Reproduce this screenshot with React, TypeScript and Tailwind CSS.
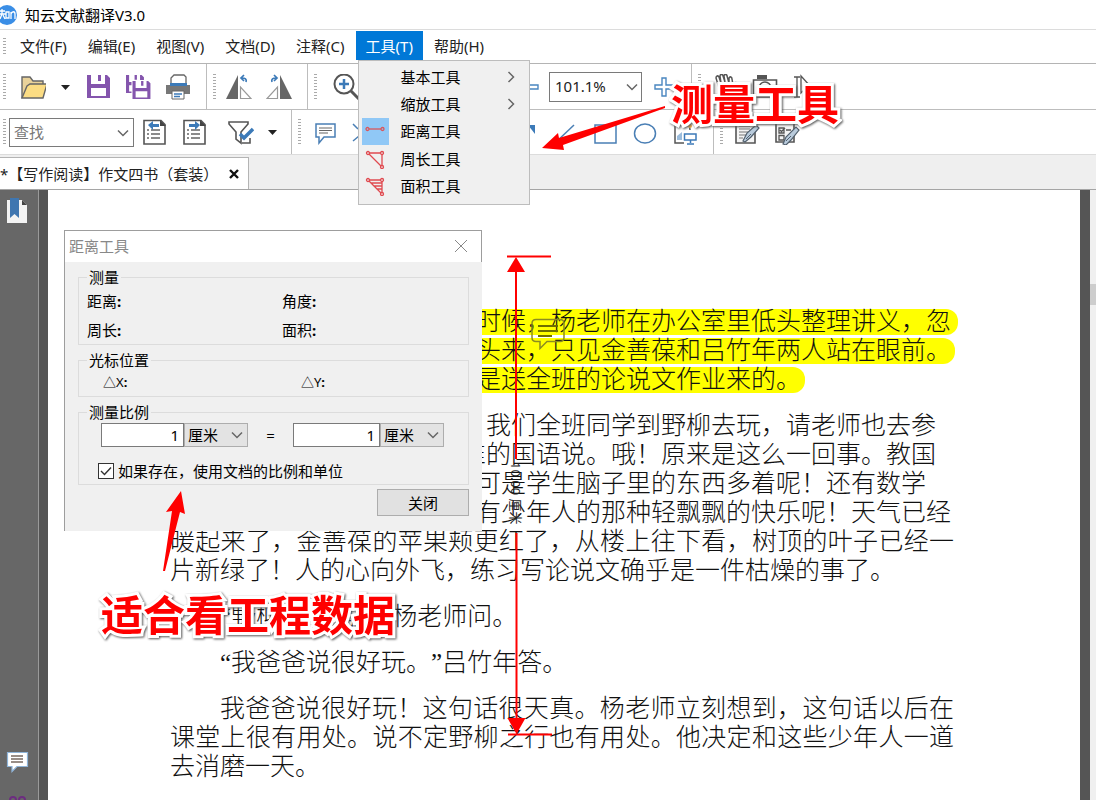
import React from 'react';

interface IconProps {
  children: React.ReactNode;
  label: string;
}

const Tool: React.FC<IconProps> = ({ children, label }) => (
  <button type="button" aria-label={label} className="h-[26px] w-[26px] shrink-0">
    <svg viewBox="0 0 26 26" className="block h-[26px] w-[26px]" fill="none">
      {children}
    </svg>
  </button>
);

const Caret: React.FC<{ label: string }> = ({ label }) => (
  <button type="button" aria-label={label} className="h-[26px] w-[11px] shrink-0">
    <svg viewBox="0 0 11 26" className="block h-[26px] w-[11px]">
      <path d="M1 11h9l-4.500 5z" fill="#222" />
    </svg>
  </button>
);

const Grip: React.FC = () => (
  <span className="h-[26px] w-[3px] shrink-0 bg-[repeating-linear-gradient(to_bottom,#aaa_0px,#aaa_1px,#fff_1px,#fff_3px)]" />
);

const Chevron: React.FC<{ className?: string }> = ({ className = '' }) => (
  <svg viewBox="0 0 12 8" className={`pointer-events-none h-2 w-3 ${className}`} fill="none" stroke="#666" strokeWidth="1.500">
    <path d="M1 1.500l5 5 5-5" />
  </svg>
);

const menus = ['文件(F)', '编辑(E)', '视图(V)', '文档(D)', '注释(C)'];

const TextPage: React.FC = () => (
  <>
    <path d="M2 1h19v23H2z" fill="#f4f4f4" stroke="#555" strokeWidth="1.600" />
    <path d="M5 7h11M5 10h11M5 13h9M5 16h7M5 19h4" stroke="#777" strokeWidth="1.200" />
    <path d="M9 22l4-8 9-8 3 3-8 9-6 5z" fill="#b9cbdc" stroke="#52606e" strokeWidth="1.200" />
    <path d="M12 20l5-5" stroke="#52606e" />
  </>
);

const FormPage: React.FC = () => (
  <>
    <path d="M2 1h18v22H2z" fill="#f4f4f4" stroke="#555" strokeWidth="1.600" />
    <path d="M5 9h5v5H5zM5 16.500h5v4.500H5zM6 11l1.500 1.500L11 9M12 11h5" stroke="#555" strokeWidth="1.300" />
    <path d="M9 25l3-7 10-10 3 3-8 10-5 5z" fill="#b9cbdc" stroke="#52606e" strokeWidth="1.200" />
    <path d="M12 22l5-5" stroke="#52606e" />
  </>
);

const ListPage: React.FC<{ back?: boolean }> = ({ back = false }) => (
  <>
    <path d="M2 1.500h17l4 4V25H2z" fill="#fff" stroke="#555" strokeWidth="1.600" />
    <path d="M18 1v6h6z" fill="#444" />
    <path d="M5 11h2M5 15h2M5 19h2M9 11h9M9 15h9M9 19h9" stroke="#666" strokeWidth="1.300" />
    {back ? (
      <path d="M6 6l5-4v3h6v3h-6v3z" fill="#3c7ab8" />
    ) : (
      <path d="M18 6l-5-4v3H7v3h6v3z" fill="#3c7ab8" />
    )}
  </>
);

const Floppy: React.FC = () => (
  <path fillRule="evenodd" d="M0 0h20l3 3v20H0zM4 0v9h14V0h-4v6h-3V0zM4 13v8h15v-8z" fill="#8455ad" />
);

const TitleBar: React.FC = () => (
  <header className="flex h-[30px] shrink-0 items-center gap-2 border-b border-[#dcdcdc] bg-white">
    <svg viewBox="0 0 17 20" className="h-5 w-[17px]">
      <circle cx="7" cy="10" r="10" fill="#3a8ee6" />
      <path d="M0 6h5M2 4v5M0 9h6M2 9l-2 5M3 10l2 4M6 7h3v6H6zM11 14V7M11 9c1-3 4-3 4 0v5" fill="none" stroke="#fff" strokeWidth="1.300" />
    </svg>
    <h1 className="text-[15px] leading-5 text-black">知云文献翻译V3.0</h1>
  </header>
);

const ToolsMenu: React.FC = () => (
  <ul className="absolute top-[29px] left-0.5 z-30 grid h-[145px] w-[172px] grid-rows-5 border border-[#bdbdbd] bg-[#f0f0f0] pt-0.5 pb-1 text-black">
    <li className="flex items-center">
      <button type="button" className="flex flex-1 items-center justify-between pr-3 pl-[42px]">
        基本工具
        <Chevron className="-rotate-90" />
      </button>
    </li>
    <li className="flex items-center">
      <button type="button" className="flex flex-1 items-center justify-between pr-3 pl-[42px]">
        缩放工具
        <Chevron className="-rotate-90" />
      </button>
    </li>
    <li className="flex items-center">
      <button type="button" className="flex flex-1 items-center gap-3 pl-[3px]">
        <span className="flex h-[27px] w-[27px] items-center justify-center bg-[#90c8f6]">
          <svg viewBox="0 0 20 20" className="h-5 w-5" fill="none" stroke="#d9575c" strokeWidth="1.300">
            <path d="M4 8h12" />
            <circle cx="2.500" cy="8" r="1.500" />
            <circle cx="17.500" cy="8" r="1.500" />
          </svg>
        </span>
        距离工具
      </button>
    </li>
    <li className="flex items-center">
      <button type="button" className="flex flex-1 items-center gap-3 pl-[3px]">
        <span className="flex h-[27px] w-[27px] items-center justify-center">
          <svg viewBox="0 0 20 20" className="h-5 w-5" fill="none" stroke="#e04a50" strokeWidth="1.300">
            <path d="M4 4h11M4 5l12 12M17 6v10" />
            <circle cx="3" cy="4" r="1.500" />
            <circle cx="17" cy="4" r="1.500" />
            <circle cx="17" cy="18" r="1.500" />
          </svg>
        </span>
        周长工具
      </button>
    </li>
    <li className="flex items-center">
      <button type="button" className="flex flex-1 items-center gap-3 pl-[3px]">
        <span className="flex h-[27px] w-[27px] items-center justify-center">
          <svg viewBox="0 0 20 20" className="h-5 w-5" fill="none" stroke="#e04a50" strokeWidth="1.300">
            <path d="M4 4h11M4 5l12 12M17 6v10M6 7h11M9 10h8M12 13h5" />
            <circle cx="3" cy="4" r="1.500" />
            <circle cx="17" cy="4" r="1.500" />
            <circle cx="17" cy="18" r="1.500" />
          </svg>
        </span>
        面积工具
      </button>
    </li>
  </ul>
);

const MenuBar: React.FC = () => (
  <nav className="flex h-[34px] shrink-0 items-start gap-px border-b border-[#b4b4b4] bg-white pt-px text-[15px] leading-5 text-[#222]">
    <span className="mt-[7px] mr-[3px] ml-[3px] h-[17px] w-[3px] bg-[repeating-linear-gradient(to_bottom,#aaa_0px,#aaa_1px,#fff_1px,#fff_3px)]" />
    {menus.map((menu) => (
      <button key={menu} type="button" className="h-[29px] px-[10px]">
        {menu}
      </button>
    ))}
    <div className="relative">
      <button type="button" className="h-[29px] bg-[#0078d7] px-[10px] text-white">
        工具(T)
      </button>
      <ToolsMenu />
    </div>
    <button type="button" className="h-[29px] px-[10px]">
      帮助(H)
    </button>
  </nav>
);

const MainToolbar: React.FC = () => (
  <div className="flex h-[46px] shrink-0 border-b border-[#bdbdbd] bg-white">
    <div className="flex w-[207px] shrink-0 items-center gap-[14px] border-r border-[#bdbdbd] pl-[3px]">
      <Grip />
      <Tool label="打开">
        <path d="M2 24V3h8l3 4h10v4" fill="#e9d29a" stroke="#666" strokeWidth="1.400" />
        <path d="M2 24l5-12 3-2h17l-4 14z" fill="#fbdc83" stroke="#666" strokeWidth="1.400" />
      </Tool>
      <Caret label="最近打开" />
      <Tool label="保存">
        <g transform="translate(2 1)">
          <Floppy />
        </g>
      </Tool>
      <Tool label="全部保存">
        <g transform="translate(1 1) scale(.78)">
          <Floppy />
        </g>
        <path d="M6.500 6H20v13h5v6H6.500z" fill="#fff" />
        <g transform="translate(7.500 7) scale(.78)">
          <Floppy />
        </g>
      </Tool>
      <Tool label="打印">
        <path d="M6 10V4l3-3h10l2 2v7" fill="#fff" stroke="#666" strokeWidth="1.300" />
        <path d="M1 11h24v9H1z" fill="#777" />
        <path d="M5 9h17v3H5z" fill="#3c7ab8" />
        <path d="M7 17h12v8H7z" fill="#fff" stroke="#666" />
        <path d="M9 20h8M9 22.500h6" stroke="#3c7ab8" strokeWidth="1.300" />
      </Tool>
    </div>
    <div className="flex w-[101px] shrink-0 items-center border-r border-[#bdbdbd] pl-[6px]">
      <Grip />
      <div className="ml-[10px] flex gap-[14px]">
        <Tool label="向左旋转">
          <path d="M12 1v24H0z" fill="#666" />
          <path d="M14.500 13v11.500H25z" stroke="#999" strokeWidth="1.200" />
          <path d="M20 8c1-3-1-4-4-4M18 1l-3 3 3 3" stroke="#3c7ab8" strokeWidth="1.700" />
        </Tool>
        <Tool label="向右旋转">
          <path d="M14 1v24h12z" fill="#666" />
          <path d="M11.500 13v11.500H1z" stroke="#999" strokeWidth="1.200" />
          <path d="M6 8c-1-3 1-4 4-4M8 1l3 3-3 3" stroke="#3c7ab8" strokeWidth="1.700" />
        </Tool>
      </div>
    </div>
    <div className="flex w-96 shrink-0 items-center justify-between border-r border-[#bdbdbd] pr-[14px] pl-[6px]">
      <div className="flex items-center gap-4">
        <Grip />
        <Tool label="放大">
          <circle cx="11" cy="10" r="9.500" stroke="#555" strokeWidth="2" />
          <path d="M18 17l8 8" stroke="#555" strokeWidth="3" />
          <path d="M11 5v10M6 10h10" stroke="#3c7ab8" strokeWidth="2.500" />
        </Tool>
      </div>
      <div className="flex items-center gap-[9px]">
        <Tool label="缩小">
          <path d="M7 11h17v4H7z" fill="#fff" stroke="#4a86c0" strokeWidth="1.400" />
        </Tool>
        <div className="relative">
          <select aria-label="缩放比例" className="block h-[30px] w-[93px] appearance-none border border-[#7a7a7a] bg-white pb-0.5 pl-[5px] text-[15px] leading-5 text-[#222]">
            <option>101.1%</option>
          </select>
          <Chevron className="absolute top-[11px] right-1" />
        </div>
        <Tool label="增大">
          <path d="M11 4h4v7h7v4h-7v7h-4v-7H4v-4h7z" fill="#fff" stroke="#4a86c0" strokeWidth="1.400" />
        </Tool>
      </div>
    </div>
    <div className="flex items-center pl-[6px]">
      <Grip />
      <div className="ml-3 flex gap-[13px]">
        <Tool label="手形">
          <path d="M6 14L3 4c0-2 2-3 3-1l2 6-1-7c0-2 3-2 3 0l2 6-1-6c0-2 3-2 3 0l2 7 0-5c1-2 3-1 3 1l1 6 2-2c1-1 3 0 2 2l-4 9c-1 3-3 5-6 5h-3c-3 0-4-4-5-11z" fill="#fff" stroke="#555" strokeWidth="1.500" />
        </Tool>
        <Tool label="快照">
          <path d="M5 1h10v4H5z" fill="#555" />
          <path d="M1.500 6h23v17h-23z" stroke="#555" strokeWidth="1.600" />
          <circle cx="13" cy="14" r="6" stroke="#555" strokeWidth="1.500" />
        </Tool>
        <Tool label="选择文本">
          <path d="M3 3h6M6 3v20M3 23h6" stroke="#555" strokeWidth="1.300" />
          <path d="M10 2v17l4-4 3 6 2-1-3-6h5z" fill="#fff" stroke="#555" strokeWidth="1.300" />
        </Tool>
      </div>
    </div>
  </div>
);

const CommentToolbar: React.FC = () => (
  <div className="flex h-[45px] shrink-0 border-b border-[#dcdcdc] bg-white">
    <div className="flex w-[292px] shrink-0 items-center border-r border-[#bdbdbd] pl-[3px]">
      <Grip />
      <div className="relative ml-[3px]">
        <input aria-label="查找" placeholder="查找" className="block h-[29px] w-[125px] border border-[#7a7a7a] bg-white px-1 text-[15px] leading-5 placeholder:text-[#777]" />
        <Chevron className="absolute top-[11px] right-[5px]" />
      </div>
      <div className="ml-2 flex gap-[14px]">
        <Tool label="上一个">
          <ListPage back />
        </Tool>
        <Tool label="下一个">
          <ListPage />
        </Tool>
      </div>
      <div className="ml-5 flex gap-[13px]">
        <Tool label="筛选">
          <path d="M1 3h19v2l-7 8v11l-5-4v-7L1 5z" fill="#fff" stroke="#555" strokeWidth="1.600" />
          <path d="M14 24h8v-5" stroke="#555" strokeWidth="1.600" />
          <path d="M12 15l4 4 9-9" stroke="#3c7ab8" strokeWidth="3.500" />
        </Tool>
        <Caret label="筛选选项" />
      </div>
    </div>
    <div className="flex w-[422px] shrink-0 items-center justify-between border-r border-[#bdbdbd] pr-[15px] pl-[6px]">
      <div className="flex items-center gap-3">
        <Grip />
        <Tool label="添加附注">
          <path d="M3 5h19v13H11l-5 6v-6H3z" fill="#fff" stroke="#4a7fb5" strokeWidth="1.500" />
          <path d="M6 9h13M6 11.500h13M6 14h9" stroke="#666" strokeWidth="1.200" />
        </Tool>
        <Tool label="插入文本">
          <path d="M2 5l5 5M2 22l6-5" stroke="#4a7fb5" strokeWidth="1.500" />
        </Tool>
      </div>
      <div className="flex gap-[14px]">
        <Tool label="箭头">
          <path d="M16 6h7v9z" fill="#3c7ab8" />
        </Tool>
        <Tool label="直线">
          <path d="M3 24L22 6" stroke="#4a7fb5" strokeWidth="1.500" />
        </Tool>
        <Tool label="矩形">
          <path d="M3 6h21v18H3z" stroke="#4a7fb5" strokeWidth="1.500" />
        </Tool>
        <Tool label="椭圆">
          <ellipse cx="13" cy="14.500" rx="10.500" ry="9.500" stroke="#4a7fb5" strokeWidth="1.500" />
        </Tool>
        <Tool label="图章">
          <path d="M12 24H3V3h14l1 8" stroke="#555" strokeWidth="1.500" />
          <path d="M5 21v-4l5-4v8z" fill="#9bbcdc" />
          <path d="M12.500 15H24v6H12.500zM18.500 21v3M15 25h7" fill="#fff" stroke="#3c7ab8" strokeWidth="1.500" />
          <circle cx="18" cy="7" r="2" fill="#f0b04a" />
        </Tool>
      </div>
    </div>
    <div className="flex items-center pl-[6px]">
      <Grip />
      <div className="ml-[11px] flex gap-[14px]">
        <Tool label="编辑内容">
          <TextPage />
        </Tool>
        <Tool label="编辑表单">
          <FormPage />
        </Tool>
      </div>
    </div>
  </div>
);

const TabStrip: React.FC = () => (
  <div className="flex h-[35px] shrink-0 items-end border-b border-[#a5a5a5] bg-[#efefef]">
    <div className="flex h-8 w-[249px] items-center justify-between border-t border-r border-[#b4b4b4] bg-white pr-[9px]">
      <span className="text-[15px] leading-5 text-[#222]">*【写作阅读】作文四书（套装）</span>
      <button type="button" aria-label="关闭标签">
        <svg viewBox="0 0 10 10" className="h-[10px] w-[10px]" stroke="#111" strokeWidth="2.400">
          <path d="M1 1l8 8M9 1l-8 8" />
        </svg>
      </button>
    </div>
  </div>
);

const Sidebar: React.FC = () => (
  <aside className="flex w-12 shrink-0 border-r-[9px] border-[#555]">
    <div className="flex flex-1 flex-col items-start border-r border-[#9a9a9a] bg-[#676767] pl-[5px]">
      <button type="button" aria-label="书签" className="mt-2">
        <svg viewBox="0 0 24 26" className="h-[26px] w-6">
          <path d="M2 2h15l5 5v18H2z" fill="#f3f3f3" />
          <path d="M17 2v5h5z" fill="#444" />
          <path d="M5 0h9v20l-4.500-4L5 20z" fill="#3f76b0" />
        </svg>
      </button>
      <button type="button" aria-label="注释" className="mt-auto mb-[22px]">
        <svg viewBox="0 0 24 26" className="h-[26px] w-6">
          <path d="M2.500 4.500h20v14H12l-5 5v-5H2.500z" fill="#fff" stroke="#8fb4d8" strokeWidth="1.200" />
          <path d="M6 8h12M6 11h12M6 14h12" stroke="#776a62" strokeWidth="1.300" />
        </svg>
      </button>
      <button type="button" aria-label="搜索">
        <svg viewBox="0 0 24 4" className="h-1 w-6" fill="none" stroke="#6d2c80" strokeWidth="2">
          <path d="M5 4c0-4 6-4 6 0M14 4c0-4 6-4 6 0" />
        </svg>
      </button>
    </div>
  </aside>
);

const DistanceDialog: React.FC = () => (
  <section className="absolute top-10 left-4 z-10 w-[418px] border-t border-l border-[#9d9d9d] bg-[#f0f0f0] text-[15px] leading-5 text-black">
    <div className="flex h-[31px] items-center justify-between border-r border-[#9d9d9d] bg-white pr-[13px] pb-0.5 pl-1">
      <h2 className="text-[#888]">距离工具</h2>
      <button type="button" aria-label="关闭窗口">
        <svg viewBox="0 0 14 14" className="h-[14px] w-[14px]" stroke="#888">
          <path d="M1 1l12 12M13 1L1 13" />
        </svg>
      </button>
    </div>
    <div className="px-[13px] pt-[5px] pb-[15px]">
      <fieldset className="border border-[#dcdcdc] pb-1 pl-2">
        <legend className="px-0.5">测量</legend>
        <div className="grid grid-cols-[195px_1fr] gap-y-[9px] pt-1">
          <span>距离<b>:</b></span>
          <span>角度<b>:</b></span>
          <span>周长<b>:</b></span>
          <span>面积<b>:</b></span>
        </div>
      </fieldset>
      <fieldset className="mt-[5px] border border-[#dcdcdc] pb-1 pl-2">
        <legend className="px-0.5">光标位置</legend>
        <div className="grid grid-cols-[198px_1fr] pt-0.5 pl-4">
          <span className="text-[13px]">△X<b>:</b></span>
          <span className="text-[13px]">△Y<b>:</b></span>
        </div>
      </fieldset>
      <fieldset className="mt-[5px] border border-[#dcdcdc] pb-[3px] pl-2">
        <legend className="px-0.5">测量比例</legend>
        <div className="flex items-center pt-px pl-[14px]">
          <input aria-label="图纸长度" defaultValue="1" className="h-6 w-[83px] border border-[#7a7a7a] bg-white pr-1 text-right" />
          <div className="relative">
            <select aria-label="图纸单位" className="block h-6 w-16 appearance-none border border-[#adadad] bg-[#e3e3e3] pl-[3px]">
              <option>厘米</option>
            </select>
            <Chevron className="absolute top-2 right-[5px]" />
          </div>
          <span className="w-[45px] text-center">=</span>
          <input aria-label="实际长度" defaultValue="1" className="h-6 w-[87px] border border-[#7a7a7a] bg-white pr-1 text-right" />
          <div className="relative">
            <select aria-label="实际单位" className="block h-6 w-16 appearance-none border border-[#adadad] bg-[#e3e3e3] pl-[3px]">
              <option>厘米</option>
            </select>
            <Chevron className="absolute top-2 right-[5px]" />
          </div>
        </div>
        <label className="mt-[14px] ml-[11px] flex items-center gap-1">
          <span className="relative flex">
            <input type="checkbox" defaultChecked className="h-4 w-4 appearance-none border border-[#333] bg-white" />
            <svg viewBox="0 0 16 16" className="pointer-events-none absolute inset-0 h-4 w-4" fill="none" stroke="#333" strokeWidth="1.400">
              <path d="M3 8l3.500 3.500L13 4.500" />
            </svg>
          </span>
          如果存在，使用文档的比例和单位
        </label>
      </fieldset>
      <div className="mt-1 flex justify-end">
        <button type="button" className="h-[27px] w-[92px] border border-[#adadad] bg-[#e1e1e1]">
          关闭
        </button>
      </div>
    </div>
  </section>
);

// Distance annotation drawn over the page
const Measurement: React.FC = () => (
  <svg viewBox="0 0 70 490" className="pointer-events-none absolute top-[61px] left-[452px] h-[490px] w-[70px]">
    <g stroke="red" strokeWidth="2">
      <path d="M7 5.500h44M8 483.500h44M16 8v200M16.500 282v190" />
    </g>
    <path d="M16 6l9 15H7zM16.500 483l9-16h-18z" fill="red" />
    <text transform="translate(11 211) rotate(90)" fontSize="13" fill="#222">
      10.00 厘米
    </text>
    <path d="M36 68.500h24q4 0 4 4v14q0 4-4 4H47l-7 7v-7h-4q-4 0-4-4v-14q0-4 4-4z" fill="none" stroke="#8c8c20" strokeWidth="1.500" />
    <path d="M38 75h20M38 80h20M38 85h14" fill="none" stroke="#6e6e00" strokeWidth="1.800" />
  </svg>
);

const Page: React.FC = () => (
  <main className="relative min-w-0 flex-1 overflow-hidden bg-white">
    <article lang="zh-CN" className="ml-[122px] w-[784px] space-y-[17px] pt-[117px] font-['Liberation_Serif','Noto_Sans_CJK_SC',serif] text-[25px] leading-[29px] font-light text-[#111] [text-spacing-trim:space-all]">
      <p className="pl-[306px] whitespace-nowrap">
        <span className="flex h-[29px] items-center">
          <mark className="h-[26px] rounded-r-xl bg-[#ff0] pr-[7px] leading-[26px] text-[#111]">时候，杨老师在办公室里低头整理讲义，忽</mark>
        </span>
        <span className="flex h-[29px] items-center">
          <mark className="h-[26px] rounded-r-xl bg-[#ff0] pr-1 leading-[26px] text-[#111]">头来，只见金善葆和吕竹年两人站在眼前。</mark>
        </span>
        <span className="flex h-[29px] items-center">
          <mark className="h-[26px] rounded-r-xl bg-[#ff0] pr-1 leading-[26px] text-[#111]">是送全班的论说文作业来的。</mark>
        </span>
      </p>
      <div>
        <p className="pl-[316px] whitespace-nowrap">我们全班同学到野柳去玩，请老师也去参</p>
        <p className="pl-[291px] whitespace-nowrap">准的国语说。哦！原来是这么一回事。教国</p>
        <p className="pl-[306px] whitespace-nowrap">可是学生脑子里的东西多着呢！还有数学</p>
        <p className="pl-[306px] whitespace-nowrap">有少年人的那种轻飘飘的快乐呢！天气已经</p>
        <p className="text-justify">暖起来了，金善葆的苹果颊更红了，从楼上往下看，树顶的叶子已经一片新绿了！人的心向外飞，练习写论说文确乎是一件枯燥的事了。</p>
      </div>
      <p className="indent-[50px]">“野柳好玩吗？”杨老师问。</p>
      <p className="indent-[50px]">“我爸爸说很好玩。”吕竹年答。</p>
      <p className="indent-[50px] text-justify">我爸爸说很好玩！这句话很天真。杨老师立刻想到，这句话以后在课堂上很有用处。说不定野柳之行也有用处。他决定和这些少年人一道去消磨一天。</p>
    </article>
    <Measurement />
    <DistanceDialog />
  </main>
);

const Callouts: React.FC = () => (
  <div className="pointer-events-none absolute inset-0 z-40 text-[42px] leading-[48px] font-bold whitespace-nowrap text-[red]">
    <svg viewBox="0 0 130 50" className="absolute top-[103px] left-[540px] h-[50px] w-[130px]" fill="red">
      <path d="M2 45l16-15 1 5L125 3v2L23 42l1 5z" />
    </svg>
    <svg viewBox="0 0 30 84" className="absolute top-[490px] left-[160px] h-[84px] w-[30px]" fill="red">
      <path d="M21 1l4 23-5-2L5 81H3l9-60-6 1z" />
    </svg>
    <p className="absolute top-[80px] left-[671px] drop-shadow-[1px_1px_1px_#555] [-webkit-text-stroke:6px_#fff] [paint-order:stroke_fill]">测量工具</p>
    <p className="absolute top-[591px] left-[101px] drop-shadow-[1px_1px_1px_#555] [-webkit-text-stroke:6px_#fff] [paint-order:stroke_fill]">适合看工程数据</p>
  </div>
);

export default function App() {
  return (
    <div lang="zh-CN" className="relative flex h-screen flex-col overflow-hidden bg-white font-['Noto_Sans','Noto_Sans_CJK_SC',sans-serif]">
      <TitleBar />
      <MenuBar />
      <MainToolbar />
      <CommentToolbar />
      <TabStrip />
      <div className="flex min-h-0 flex-1">
        <Sidebar />
        <Page />
        <div className="w-4 shrink-0 border-l-[10px] border-[#555] bg-[#f0f0f0]">
          <div className="mt-[94px] h-[21px] bg-[#cdcdcd]" />
        </div>
      </div>
      <Callouts />
    </div>
  );
}
